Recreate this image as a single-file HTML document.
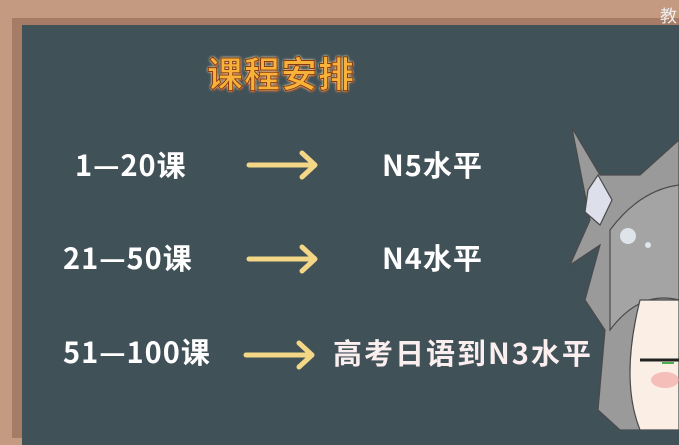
<!DOCTYPE html>
<html><head><meta charset="utf-8"><style>
body{margin:0;width:679px;height:430px;overflow:hidden;background:#c49a80;position:relative;font-family:"Noto Sans CJK SC","Liberation Sans",sans-serif}
.fr{position:absolute;left:12px;top:18px;width:700px;height:420px;background:#a67c66}
.bd{position:absolute;left:22px;top:25px;width:700px;height:420px;background:#415158}
.t{position:absolute;color:#fff;font-weight:bold;font-size:29px;letter-spacing:1px;white-space:nowrap;line-height:1}
.title{position:absolute;left:207px;top:54px;font-size:36px;letter-spacing:1px;font-weight:bold;color:#f7b23a;line-height:1;
 -webkit-text-stroke:1px #8a3a10;text-shadow:0 0 2px #fff3c0,0 0 3px #fff3c0,1px 2px 0 #7a3010}
.ar{position:absolute}
</style></head><body>
<div class="fr"></div><div class="bd"></div>
<div class="t" style="left:660px;top:6px;font-size:17px;color:#eee;font-weight:normal;letter-spacing:0">教</div>
<div class="title">课程安排</div>
<div class="t" style="left:75px;top:150px">1—20课</div>
<div class="t" style="left:63px;top:243px">21—50课</div>
<div class="t" style="left:63px;top:337px">51—100课</div>
<div class="t" style="left:382px;top:150px">N5水平</div>
<div class="t" style="left:382px;top:243px">N4水平</div>
<div class="t" style="left:333px;top:338px;color:#fbeeee;letter-spacing:2px">高考日语到N3水平</div>
<svg class="ar" width="679" height="430" style="left:0;top:0">
<g stroke="#f3d686" stroke-width="5" stroke-linecap="round" fill="none" stroke-linejoin="round">
<path d="M249 165H314M302 153L315 165L302 177"/>
<path d="M249 259H314M302 247L315 259L302 271"/>
<path d="M246 355H311M299 343L312 355L299 367"/>
</g>
<g stroke="#4a4a4a" stroke-width="1.2">
<path d="M572 128L590 220L570 265L600 245L585 300L605 330L598 410L620 430L679 430L679 140L640 175L600 175Z" fill="#9a9a9a"/>
<path d="M588 190L598 175L612 200L600 225L585 212Z" fill="#dde0ea"/>
<path d="M610 230Q640 190 679 185L679 300Q640 290 610 330Z" fill="#a4a4a4"/>
<path d="M640 300L679 300L679 430L640 430Q620 380 640 300Z" fill="#fbeee4"/>
</g>
<circle cx="628" cy="236" r="8" fill="#dfe3ea"/><circle cx="648" cy="245" r="3" fill="#dfe3ea"/>
<ellipse cx="665" cy="380" rx="14" ry="8" fill="#f3a9a6" opacity=".7"/>
<path d="M640 360H679" stroke="#222" stroke-width="3"/>
<path d="M662 363H674" stroke="#4caf50" stroke-width="2"/>
</svg>
</body></html>
